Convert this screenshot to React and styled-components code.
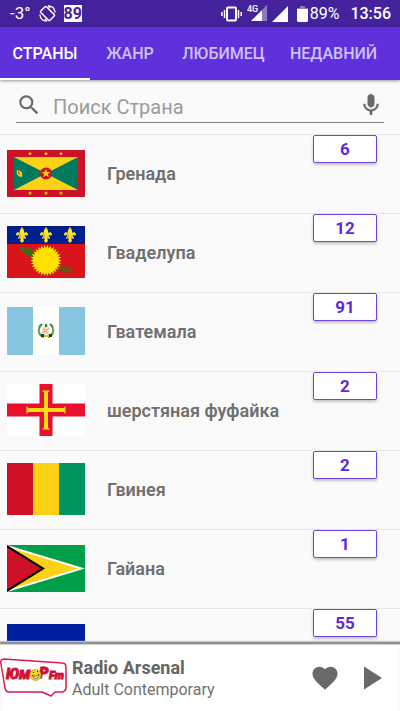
import React, { useState } from 'react';
import styled, { createGlobalStyle } from 'styled-components';

const GlobalStyle = createGlobalStyle`
  *, *::before, *::after { box-sizing: border-box; }
  body { margin: 0; background: #fafafa; font-family: Roboto, "Noto Sans", sans-serif; }
  button, input { font: inherit; border: 0; background: none; padding: 0; margin: 0; }
  svg { display: block; flex: none; }
`;

const Screen = styled.div`
  display: flex;
  flex-direction: column;
  height: 100vh;
  overflow: hidden;
  color: #757575;
`;

const StatusBar = styled.header`
  display: flex;
  align-items: center;
  justify-content: space-between;
  flex: none;
  height: 27px;
  padding: 0 9px 0 10px;
  background: #44229b;
  color: #fff;
  font-size: 17px;
  line-height: 27px;
`;

const StatusGroup = styled.div`
  display: flex;
  align-items: center;
  gap: ${(p) => p.$gap}px;
`;

const BatteryLevel = styled.span`
  display: flex;
  align-items: center;
  gap: 2px;
  padding: 0 6px 0 4px;
  font-size: 16px;
`;

const Clock = styled.time`
  font-weight: 500;
  font-size: 16px;
`;

const NumberChip = styled.span`
  background: #fff;
  color: #44229b;
  font-size: 16px;
  font-weight: 700;
  line-height: 17px;
`;

const Tabs = styled.nav`
  display: grid;
  grid-template-columns: 90fr 80fr 107fr 113fr 10fr;
  flex: none;
  height: 53px;
  background: #6030dc;
  box-shadow: 0 1px 3px rgba(0, 0, 0, 0.4);
  z-index: 1;
`;

const Tab = styled.button`
  border-bottom: 2px solid ${(p) => (p.$active ? '#fff' : 'transparent')};
  padding-top: 2px;
  color: ${(p) => (p.$active ? '#fff' : '#cfc1f4')};
  font-size: 16px;
  font-weight: 500;
  white-space: nowrap;
`;

const SearchBar = styled.form`
  display: flex;
  align-items: center;
  flex: none;
  height: 43px;
  margin: 0 16px 11px;
  padding-top: 8px;
  border-bottom: 1px solid #808080;
`;

const SearchInput = styled.input`
  flex: 1;
  min-width: 0;
  padding: 4px 0 0 11px;
  color: #616161;
  font-size: 20px;
  outline: 0;
  &::placeholder { color: #9b9b9b; opacity: 1; }
`;

const IconButton = styled.button`
  display: grid;
  place-items: center;
  color: #696969;
`;

const CountryList = styled.ul`
  flex: 1;
  min-height: 0;
  margin: 0;
  padding: 0;
  overflow: hidden;
  list-style: none;
`;

const CountryRow = styled.button`
  display: flex;
  align-items: center;
  width: 100%;
  height: 79px;
  padding: 0 23px 2px 7px;
  border-top: 1px solid #e6e6e6;
  color: #707070;
  text-align: left;
`;

const CountryName = styled.span`
  flex: 1;
  padding-left: 22px;
  font-size: 18px;
  font-weight: 600;
`;

const Count = styled.span`
  align-self: flex-start;
  width: 64px;
  height: 28px;
  border: 1px solid #7044e0;
  border-radius: 2px;
  background: #fff;
  box-shadow: 0 2px 3px rgba(0, 0, 0, 0.22);
  color: #5d2bdc;
  font-size: 17px;
  font-weight: 700;
  line-height: 27px;
  text-align: center;
`;

const Player = styled.footer`
  display: flex;
  align-items: center;
  flex: none;
  height: 69px;
  padding: 0 16px 0 0;
  border-top: 2px solid #929292;
  background: #fff;
  box-shadow: 0 -1px 1px #c8c8c8, inset 0 1px 1px #ccc;
  z-index: 1;
`;

const NowPlaying = styled.div`
  flex: 1;
  padding: 1px 0 0 4px;
`;

const Station = styled.div`
  color: #666;
  font-size: 18px;
  font-weight: 700;
  line-height: 23px;
`;

const Genre = styled.div`
  color: #717171;
  font-size: 16px;
  line-height: 22px;
`;

const Controls = styled.div`
  display: flex;
  align-items: center;
  gap: 20px;
`;

const STAR = '0,-3 .8,-1 3,-1 1.2,.3 1.9,2.5 0,1.2 -1.9,2.5 -1.2,.3 -3,-1 -.8,-1';

function Star({ x, y, s = 0.75 }) {
  return <polygon points={STAR} fill="#fcd116" transform={`translate(${x} ${y}) scale(${s})`} />;
}

function Grenada() {
  return (
    <svg width="78" height="47" viewBox="0 0 78 47">
      <path fill="#ce1126" d="M0 0h78v47H0z" />
      <path fill="#007a5e" d="M7 7h64v33H7z" />
      <path fill="#fcd116" d="M7 7h64L7 40h64z" />
      <circle cx="39" cy="23.5" r="6" fill="#ce1126" />
      <Star x={39} y={23.5} s={1.5} />
      {[23, 39, 54].map((x) => (
        <g key={x}><Star x={x} y={3.7} /><Star x={x} y={43.2} /></g>
      ))}
      <path fill="#fcd116" d="M10 20c4 0 6 3 5 7-4 0-6-3-5-7z" />
      <path fill="#ce1126" d="M12 19c0 3 0 5 2 7l-3-3z" />
    </svg>
  );
}

function Lily({ x }) {
  return (
    <g transform={`translate(${x} 9)`} fill="#ffe31f" stroke="none">
      <path d="M0-8C3-4 3-1 1 2h-2C-3-1-3-4 0-8zM1.5 2C1-3 5-4 6-1c0 2-2 2-2 1C3-1 3 1 2.500 3zM-1.500 2C-1-3-5-4-6-1c0 2 2 2 2 1 1-1 1 1 1.500 3zM-4 2h8v1.500h-8zM-1 3h2l1 3-2 2-2-2z" />
    </g>
  );
}

function Guadeloupe() {
  const rays = Array.from({ length: 60 }, (_, i) => {
    const a = (i * Math.PI) / 30;
    const r = i % 2 ? 12.5 : 15.5;
    return `${39 + r * Math.cos(a)},${34.5 + r * Math.sin(a)}`;
  }).join(' ');
  return (
    <svg width="78" height="52" viewBox="0 0 78 52">
      <path fill="#d9141a" d="M0 0h78v52H0z" />
      <path fill="#00208c" d="M0 0h78v18H0z" />
      <Lily x={15} /><Lily x={39} /><Lily x={63} />
      <path fill="#5a6412" d="M12 22l5-1 3 2 4-1 3 5 6 8-4-1-4-1-2-3-6-2-1-3-4-1z" />
      <path fill="#347012" d="M15 23l9 1 6 8-8-3z" />
      <path fill="#7b4912" d="M49 38l17 4-4 6-15-5z" />
      <polygon fill="#ffe000" points={rays} />
    </svg>
  );
}

function Guatemala() {
  return (
    <svg width="78" height="48" viewBox="0 0 78 48">
      <path fill="#87c5e1" d="M0 0h78v48H0z" />
      <path fill="#fff" d="M26 0h26v48H26z" />
      <path fill="none" stroke="#348b45" strokeWidth="2" d="M35 17c-5 4-4 11 2 13M43 17c5 4 4 11-2 13" />
      <path fill="none" stroke="#92bd84" d="M32 20c-1 4 1 7 3 9M46 20c1 4-1 7-3 9" />
      <path fill="#f2ddb8" d="M36 20l5-2 1 7-4 3-3-3z" />
      <path stroke="#d3b184" strokeWidth="1" d="M35 26l8-5M36 21l6 7" />
      <path fill="#31783d" d="M38 17h2v3h-2z" />
      <path fill="#263b20" d="M34 27h3v3h-3zM42 27h3v3h-3z" />
      <path fill="#d7c32d" d="M37 28h5v2h-5z" />
    </svg>
  );
}

function Guernsey() {
  return (
    <svg width="78" height="52" viewBox="0 0 78 52">
      <path fill="#fff" d="M0 0h78v52H0z" />
      <path fill="#e8112d" d="M32.5 0h13v52h-13zM0 19.5h78v13H0z" />
      <path fill="#f9dd16" d="M35 6.5h8l-2 2v15.500h15.500l2-2v8l-2-2H41v15.500l2 2h-8l2-2V28H21.500l-2 2v-8l2 2H37V8.500z" />
    </svg>
  );
}

function Guinea() {
  return (
    <svg width="78" height="52" viewBox="0 0 78 52">
      <path fill="#ce1126" d="M0 0h26v52H0z" />
      <path fill="#fcd116" d="M26 0h26v52H26z" />
      <path fill="#009460" d="M52 0h26v52H52z" />
    </svg>
  );
}

function Guyana() {
  return (
    <svg width="78" height="47" viewBox="0 0 78 47">
      <path fill="#009e49" d="M0 0h78v47H0z" />
      <path fill="#fff" d="M0 0l78 23.500L0 47z" />
      <path fill="#fcd116" d="M0 2l71 21.500L0 45z" />
      <path fill="#000" d="M0 0l38 23.500L0 47z" />
      <path fill="#ce1126" d="M0 2.500l34 21L0 44.500z" />
    </svg>
  );
}

function Haiti() {
  return (
    <svg width="78" height="47" viewBox="0 0 78 47">
      <path fill="#00209f" d="M0 0h78v24H0z" />
      <path fill="#d21034" d="M0 24h78v23H0z" />
      <path fill="#fff" d="M31 17h15v13H31z" />
      <path fill="#016a16" d="M33 26h11v3H33zM38 19h1v7h-1z" />
    </svg>
  );
}

const countries = [
  { name: 'Гренада', count: 6, Flag: Grenada },
  { name: 'Гваделупа', count: 12, Flag: Guadeloupe },
  { name: 'Гватемала', count: 91, Flag: Guatemala },
  { name: 'шерстяная фуфайка', count: 2, Flag: Guernsey },
  { name: 'Гвинея', count: 2, Flag: Guinea },
  { name: 'Гайана', count: 1, Flag: Guyana },
  { name: 'Гаити', count: 55, Flag: Haiti },
];

const tabs = ['СТРАНЫ', 'ЖАНР', 'ЛЮБИМЕЦ', 'НЕДАВНИЙ'];

function RotateIcon() {
  return (
    <svg width="17" height="17" viewBox="0 0 17 17" fill="none" stroke="#fff">
      <rect x="4.5" y="2" width="8" height="13" rx="1" strokeWidth="1.5" transform="rotate(-45 8.500 8.500)" />
      <path strokeWidth="1.3" d="M9 .8c4 0 6.700 2.700 7.200 6.700M8 16.200C4 16.200 1.300 13.500.8 9.500M9 .8l2.300 2.300M8 16.200l-2.300-2.300" />
    </svg>
  );
}

function VibrateIcon() {
  return (
    <svg width="21" height="16" viewBox="0 0 21 16" fill="none" stroke="#fff">
      <rect x="6" y="1.5" width="9" height="13" rx="1" strokeWidth="2" />
      <path strokeWidth="1.5" d="M3.500 4v8M17.500 4v8M.8 6v4M20.200 6v4" />
    </svg>
  );
}

function MobileSignalIcon() {
  return (
    <svg width="20" height="17" viewBox="0 0 20 17">
      <path fill="#8e7abf" d="M15 5l5-5v16h-5z" />
      <path fill="#fff" d="M4 16L15 5v11z" />
      <text x="0" y="7" fill="#fff" fontSize="9" fontWeight="500">4G</text>
    </svg>
  );
}

function SignalIcon() {
  return <svg width="16" height="16" viewBox="0 0 16 16"><path fill="#fff" d="M0 16L16 0v16z" /></svg>;
}

function BatteryIcon() {
  return (
    <svg width="11" height="16" viewBox="0 0 11 16">
      <path fill="#8e7abf" d="M3 0h5v2h3v2H0V2h3z" />
      <path fill="#fff" d="M0 3h11v12l-1 1H1l-1-1z" />
    </svg>
  );
}

function SearchIcon() {
  return (
    <svg width="26" height="26" viewBox="0 0 24 24">
      <path fill="#696969" d="M15.500 14h-.79l-.28-.27A6.470 6.470 0 0016 9.500 6.500 6.500 0 109.500 16c1.610 0 3.090-.59 4.230-1.570l.27.28v.79l5 4.990L20.490 19l-4.990-5zm-6 0C7.010 14 5 11.990 5 9.500S7.010 5 9.500 5 14 7.010 14 9.500 11.990 14 9.500 14z" />
    </svg>
  );
}

function MicIcon() {
  return (
    <svg width="26" height="26" viewBox="0 0 24 24">
      <path fill="currentColor" stroke="currentColor" strokeWidth=".4" d="M12 14c1.660 0 3-1.340 3-3V5c0-1.660-1.340-3-3-3S9 3.340 9 5v6c0 1.660 1.340 3 3 3zm5.300-3c0 3-2.540 5.100-5.300 5.100S6.700 14 6.700 11H5c0 3.410 2.720 6.230 6 6.720V21h2v-3.280c3.280-.48 6-3.300 6-6.720h-1.700z" />
    </svg>
  );
}

function HeartIcon() {
  return (
    <svg width="30" height="30" viewBox="0 0 24 24">
      <path fill="currentColor" d="M12 21.350l-1.450-1.320C5.400 15.360 2 12.280 2 8.500 2 5.420 4.420 3 7.500 3c1.740 0 3.410.81 4.500 2.090C13.090 3.810 14.760 3 16.500 3 19.580 3 22 5.420 22 8.500c0 3.780-3.400 6.860-8.550 11.540L12 21.350z" />
    </svg>
  );
}

function PlayIcon() {
  return <svg width="24" height="24" viewBox="0 0 24 24"><path fill="currentColor" d="M4 .5L22 12 4 23.500z" /></svg>;
}

function StationLogo() {
  return (
    <svg width="68" height="40" viewBox="0 0 68 40" role="img" aria-label="Юмор FM">
      <path fill="#fff" stroke="#e3174d" strokeWidth="1.5" strokeLinejoin="round" d="M4 1L62 5q4 0 4 4v20q0 5-5 5H55l-4 4-9-4H9q-3 0-4-4L1 6q-1-5 3-5z" />
      <g fill="#e00b38" stroke="#d00b32" strokeWidth=".9" fontFamily="Roboto, sans-serif" fontStyle="italic" fontWeight="900">
        <text x="6" y="21" fontSize="14">Ю</text>
        <text x="19" y="21" fontSize="13">М</text>
        <text x="39" y="20" fontSize="15">Р</text>
        <text x="49" y="21" fontSize="11">Fm</text>
      </g>
      <circle cx="35.5" cy="17" r="5.5" fill="#f4d914" stroke="#a98b13" strokeWidth=".6" />
      <path fill="#fff" stroke="#4a3710" strokeWidth=".7" d="M32 17q4 3 7-1-1 6-5 4z" />
      <path stroke="#33270d" strokeWidth="1" d="M33 14l1 1M37 13l1 1" />
    </svg>
  );
}

export default function App() {
  const [active, setActive] = useState(0);
  const [query, setQuery] = useState('');
  return (
    <Screen>
      <GlobalStyle />
      <StatusBar>
        <StatusGroup $gap={8}>
          <span>-3°</span>
          <RotateIcon />
          <NumberChip>89</NumberChip>
        </StatusGroup>
        <StatusGroup $gap={5}>
          <VibrateIcon />
          <MobileSignalIcon />
          <SignalIcon />
          <BatteryLevel><BatteryIcon />89%</BatteryLevel>
          <Clock>13:56</Clock>
        </StatusGroup>
      </StatusBar>
      <Tabs role="tablist">
        {tabs.map((label, i) => (
          <Tab key={label} type="button" role="tab" aria-selected={i === active} $active={i === active} onClick={() => setActive(i)}>
            {label}
          </Tab>
        ))}
      </Tabs>
      <SearchBar role="search" onSubmit={(e) => e.preventDefault()}>
        <SearchIcon />
        <SearchInput type="text" aria-label="Поиск Страна" placeholder="Поиск Страна" value={query} onChange={(e) => setQuery(e.target.value)} />
        <IconButton type="button" aria-label="Голосовой поиск"><MicIcon /></IconButton>
      </SearchBar>
      <CountryList>
        {countries.map(({ name, count, Flag }) => (
          <li key={name}>
            <CountryRow type="button">
              <Flag />
              <CountryName>{name}</CountryName>
              <Count>{count}</Count>
            </CountryRow>
          </li>
        ))}
      </CountryList>
      <Player>
        <StationLogo />
        <NowPlaying>
          <Station>Radio Arsenal</Station>
          <Genre>Adult Contemporary</Genre>
        </NowPlaying>
        <Controls>
          <IconButton type="button" aria-label="В избранное"><HeartIcon /></IconButton>
          <IconButton type="button" aria-label="Играть"><PlayIcon /></IconButton>
        </Controls>
      </Player>
    </Screen>
  );
}
